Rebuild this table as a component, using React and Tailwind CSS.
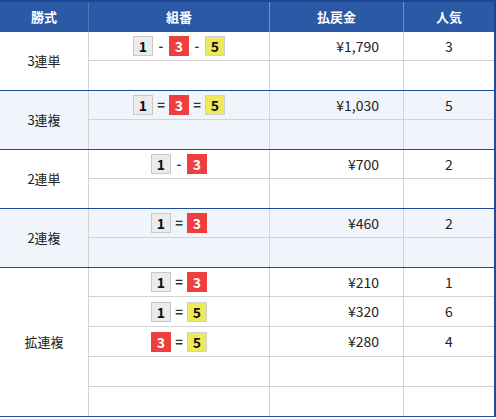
const groups = [
  {
    label: '3連単',
    bg: 'bg-white',
    rows: [
      { combo: [1, '-', 3, '-', 5], pay: '¥1,790', pop: '3' },
      null,
    ],
  },
  {
    label: '3連複',
    bg: 'bg-[#f0f5fc]',
    rows: [
      { combo: [1, '=', 3, '=', 5], pay: '¥1,030', pop: '5' },
      null,
    ],
  },
  {
    label: '2連単',
    bg: 'bg-white',
    rows: [
      { combo: [1, '-', 3], pay: '¥700', pop: '2' },
      null,
    ],
  },
  {
    label: '2連複',
    bg: 'bg-[#f0f5fc]',
    rows: [
      { combo: [1, '=', 3], pay: '¥460', pop: '2' },
      null,
    ],
  },
  {
    label: '拡連複',
    bg: 'bg-white',
    rows: [
      { combo: [1, '=', 3], pay: '¥210', pop: '1' },
      { combo: [1, '=', 5], pay: '¥320', pop: '6' },
      { combo: [3, '=', 5], pay: '¥280', pop: '4' },
      null,
      null,
    ],
  },
];

const boxStyle = {
  1: 'bg-[#ebebeb] border border-[#c9c9c9] text-[#111]',
  3: 'bg-[#ef3e3e] text-white',
  5: 'bg-[#ede95b] border border-[#cfcfcf] text-[#111]',
};

function Boat({ n }) {
  return (
    <span className={`w-5 h-5 flex items-center justify-center text-[14px] font-semibold leading-none ${boxStyle[n]}`}>
      {n}
    </span>
  );
}

function Combo({ items }) {
  return (
    <div className="flex items-center">
      {items.map((it, i) =>
        typeof it === 'number'
          ? <Boat key={i} n={it} />
          : <span key={i} className="w-4 text-center text-[13px] font-bold text-[#333]">{it}</span>
      )}
    </div>
  );
}

function Row({ row, height, last }) {
  return (
    <div className={`flex text-[14px] ${height} ${last ? '' : 'border-b border-[#d3d3d3]'}`}>
      <div className="w-[181px] border-r border-[#d3d3d3] flex items-center justify-center">
        {row && <Combo items={row.combo} />}
      </div>
      <div className="w-[134px] border-r border-[#d3d3d3] flex items-center justify-end pr-6">
        {row?.pay}
      </div>
      <div className="flex-1 flex items-center justify-center">{row?.pop}</div>
    </div>
  );
}

export default function App() {
  return (
    <div className="w-[496px] bg-white text-[13px] text-[#222] font-['Noto_Sans_CJK_JP',sans-serif]">
      <div className="flex h-[32px] border-t-2 border-r-2 border-[#1d4594] bg-[#2c59a6] text-white font-bold">
        <div className="w-[89px] border-r border-[#4f77b9] flex items-center justify-center">勝式</div>
        <div className="w-[181px] border-r border-[#6f92cc] flex items-center justify-center">組番</div>
        <div className="w-[134px] border-r border-[#6f92cc] flex items-center justify-center">払戻金</div>
        <div className="flex-1 flex items-center justify-center">人気</div>
      </div>

      {groups.map(g => {
        const big = g.rows.length > 2;
        return (
          <div key={g.label} className={`flex border-b border-r-2 border-[#1e4b9b] ${g.bg} ${big ? 'h-[149px]' : 'h-[59px]'}`}>
            <div className="w-[89px] border-r border-[#d3d3d3] flex items-center justify-center">{g.label}</div>
            <div className="flex-1 flex flex-col">
              {g.rows.map((r, i) => {
                const last = i === g.rows.length - 1;
                const h = last ? 'flex-1' : i === 0 ? 'h-[29px]' : 'h-[30px]';
                return <Row key={i} row={r} height={h} last={last} />;
              })}
            </div>
          </div>
        );
      })}
    </div>
  );
}
